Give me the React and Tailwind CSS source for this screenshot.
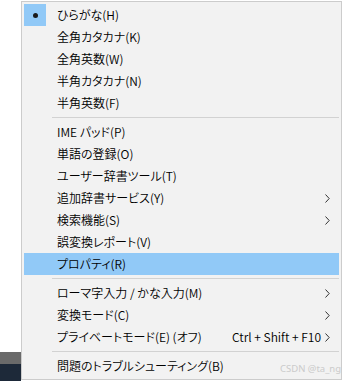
import React from 'react'

const groups = [
  [
    { label: 'ひらがな(H)', checked: true },
    { label: '全角カタカナ(K)' },
    { label: '全角英数(W)' },
    { label: '半角カタカナ(N)' },
    { label: '半角英数(F)' },
  ],
  [
    { label: 'IME パッド(P)' },
    { label: '単語の登録(O)' },
    { label: 'ユーザー辞書ツール(T)' },
    { label: '追加辞書サービス(Y)', submenu: true },
    { label: '検索機能(S)', submenu: true },
    { label: '誤変換レポート(V)' },
    { label: 'プロパティ(R)', active: true },
  ],
  [
    { label: 'ローマ字入力 / かな入力(M)', submenu: true },
    { label: '変換モード(C)', submenu: true },
    { label: 'プライベートモード(E) (オフ)', shortcut: 'Ctrl + Shift + F10', submenu: true },
  ],
  [
    { label: '問題のトラブルシューティング(B)' },
  ],
]

function Chevron() {
  return (
    <svg width="5" height="9" viewBox="0 0 5 9" className="block">
      <polyline points="0.5,0.5 4.2,4.5 0.5,8.5" fill="none" stroke="#333" strokeWidth="1" />
    </svg>
  )
}

function MenuItem({ item }) {
  return (
    <div className={`h-[22px] mx-[2px] flex items-center ${item.active ? 'bg-[#91c9f7]' : ''}`}>
      <div className={`w-[22px] h-full flex items-center justify-center ${item.checked ? 'bg-[#91c9f7]' : ''}`}>
        {item.checked && <div className="w-[5px] h-[5px] rounded-full bg-[#1a1a1a]" />}
      </div>
      <div className="flex-1 pl-[11px] leading-none whitespace-nowrap">{item.label}</div>
      {item.shortcut && <div className="leading-none whitespace-nowrap pr-[4px]">{item.shortcut}</div>}
      <div className="w-[14px] pr-[9px] flex items-center justify-end">
        {item.submenu && <Chevron />}
      </div>
    </div>
  )
}

export default function App() {
  return (
    <div
      className="relative w-[343px] h-[381px] flex bg-white overflow-hidden text-[12px] font-[350] text-black [font-feature-settings:'palt']"
      style={{ fontFamily: '"Noto Sans CJK JP", "Noto Sans", sans-serif' }}
    >
      {/* desktop strip behind the menu */}
      <div className="w-[21px] flex flex-col">
        <div className="flex-1 bg-white" />
        <div className="h-[12px] bg-[#6a6a6a]" />
        <div className="h-[17px] bg-[#1d2939]" />
      </div>

      {/* context menu */}
      <div className="mt-[1px] self-start w-[321px] border border-[#cccccc] bg-[#f2f2f2] py-[2px]">
        {groups.map((group, gi) => (
          <div key={gi}>
            {gi > 0 && (
              <div className="h-[7px] flex items-center">
                <div className="ml-[30px] mr-[2px] flex-1 h-px bg-[#d2d2d2]" />
              </div>
            )}
            {group.map((item) => (
              <MenuItem key={item.label} item={item} />
            ))}
          </div>
        ))}
      </div>

      <div
        className="absolute left-[280px] top-[364px] text-[9.5px] font-normal leading-none text-[#cbcbcb] whitespace-nowrap"
        style={{ fontFamily: '"Noto Sans", sans-serif' }}
      >
        CSDN @ta_ng
      </div>
    </div>
  )
}
